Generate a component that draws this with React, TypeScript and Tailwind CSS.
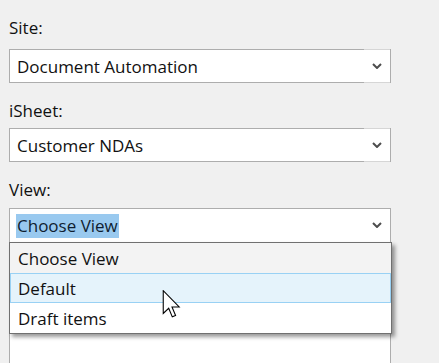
import { ReactNode } from "react";

function Chevron() {
  return (
    <svg width="10" height="6" viewBox="0 0 10 6" className="block">
      <path d="M1 1 L5 5 L9 1" fill="none" stroke="#4d4d4d" strokeWidth="2" />
    </svg>
  );
}

function Label({ children }: { children: ReactNode }) {
  return (
    <div className="h-[45px] pt-[17px] text-[17px] leading-[22px] text-[#111]">{children}</div>
  );
}

function Select({ children, tall }: { children: ReactNode; tall?: boolean }) {
  return (
    <div
      className={
        tall
          ? "w-[382px] h-[200px] bg-white border border-[#adadad] flex items-start"
          : "w-[382px] h-[34px] bg-white border-x border-[#adadad] flex"
      }
    >
      <div
        className={
          tall
            ? "flex-1 h-[32px] flex items-center pl-[6px] pt-[2px] text-[17px] text-[#111]"
            : "flex-1 border-y border-[#adadad] flex items-center pl-[7px] pt-[2px] text-[17px] text-[#111]"
        }
      >
        {children}
      </div>
      <div
        className={
          tall
            ? "w-[26px] h-[32px] flex items-center justify-center pr-[1px]"
            : "w-[26px] border-y border-[#d6d6d6] flex items-center justify-center pr-[1px]"
        }
      >
        <Chevron />
      </div>
    </div>
  );
}

function Cursor() {
  return (
    <svg width="19" height="28" viewBox="0 0 12.5 19.5" className="absolute left-[162px] top-[290px]">
      <path
        d="M0.5 0.5 V16.3 L4.3 12.7 L6.8 18.7 L9.1 17.7 L6.6 11.8 H11.6 Z"
        fill="white"
        stroke="black"
        strokeWidth="0.75"
        strokeLinejoin="miter"
      />
    </svg>
  );
}

export default function App() {
  return (
    <main
      className="relative h-screen overflow-hidden bg-[#f0f0f0] pl-[9px]"
      style={{ fontFamily: '"Segoe UI", "Open Sans", sans-serif' }}
    >
      <div className="h-[49px] pt-[17px] text-[17px] leading-[22px] text-[#111]">Site:</div>
      <Select>Document Automation</Select>
      <Label>iSheet:</Label>
      <Select>Customer NDAs</Select>
      <div className="h-[46px] pt-[17px] text-[17px] leading-[22px] text-[#111]">View:</div>
      <Select tall>
        <span className="bg-[#99c9ef] px-[1px] leading-[24px] text-[#0f1d30]">Choose View</span>
      </Select>

      {/* dropdown list */}
      <div className="absolute left-[9px] top-[242px] w-[383px] border border-[#707070] bg-white shadow-[3px_3px_4px_rgba(0,0,0,0.4)] text-[17px] text-[#111]">
        <div className="h-[30px] bg-[#f3f3f3] flex items-center pl-[8px] pt-[2px]">Choose View</div>
        <div className="h-[30px] bg-[#e5f3fb] border border-[#99d1f4] flex items-center pl-[7px] pt-[2px]">Default</div>
        <div className="h-[30px] bg-white flex items-center pl-[8px] pt-[2px]">Draft items</div>
      </div>

      <Cursor />
    </main>
  );
}
